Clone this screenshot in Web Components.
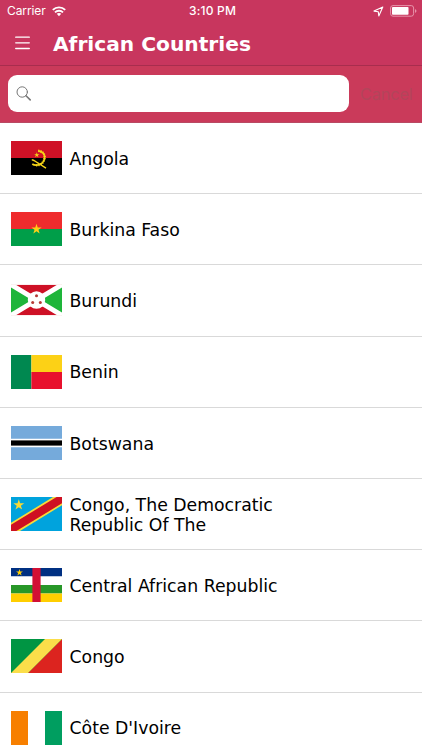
<!DOCTYPE html>
<html lang="en">
<head>
<meta charset="utf-8">
<title>African Countries</title>
<style>
    body {
        margin: 0;
        height: 750px;
        overflow: hidden;
        background: #fff;
        font-family: Verdana, "DejaVu Sans", sans-serif;
    }
</style>
</head>
<body>
<countries-app></countries-app>

<script>
const star = (cx, cy, r, fill) => {
    const points = [];
    for (let i = 0; i < 10; i++) {
        const radius = i % 2 ? r * 0.382 : r;
        const angle = Math.PI * i / 5 - Math.PI / 2;
        points.push(`${(cx + radius * Math.cos(angle)).toFixed(2)},${(cy + radius * Math.sin(angle)).toFixed(2)}`);
    }
    return `<polygon points="${points.join(" ")}" fill="${fill}"/>`;
};

// Every flag is drawn on a 51 x 34 canvas
const flags = {
    ao: `<rect width="51" height="17" fill="#cf1126"/>
        <rect y="17" width="51" height="17" fill="#000"/>
        <path d="M27.2 9.8C31.5 10.2 34 13 33.6 17C33.2 21.3 29.5 24.4 25 24.2C23.7 24.1 22.3 23.7 21.3 23" fill="none" stroke="#f7d618" stroke-width="1.7"/>
        <path d="M27.2 9.8C31.5 10.2 34 13 33.6 17C33.2 21.3 29.5 24.4 25 24.2" fill="none" stroke="#f7d618" stroke-width="2.5" stroke-dasharray="1 1.2"/>
        <path d="M20.8 18.8C23.5 19 24 20.6 27 22L35 27.2" fill="none" stroke="#f7d618" stroke-width="1.4"/>
        ${star(25.8, 14, 2.8, "#f7d618")}`,
    bf: `<rect width="51" height="17" fill="#ef2b2d"/>
        <rect y="17" width="51" height="17" fill="#009e49"/>
        ${star(25.5, 17.2, 5.4, "#fcd116")}`,
    bi: `<svg y="1.7" width="51" height="30.6" viewBox="0 0 51 30.6">
            <rect width="51" height="30.6" fill="#ce1126"/>
            <path d="M0 0L25.5 15.3L0 30.6ZM51 0L25.5 15.3L51 30.6Z" fill="#1eb53a"/>
            <path d="M0 0L51 30.6M51 0L0 30.6" stroke="#fff" stroke-width="5"/>
            <circle cx="25.5" cy="15.3" r="8.7" fill="#fff"/>
            <g fill="#b53b37"><circle cx="25.5" cy="11" r="1.5"/><circle cx="21.7" cy="17.7" r="1.5"/><circle cx="29.3" cy="17.7" r="1.5"/></g>
        </svg>`,
    bj: `<rect width="20.4" height="34" fill="#008850"/>
        <rect x="20.4" width="30.6" height="17" fill="#fcd116"/>
        <rect x="20.4" y="17" width="30.6" height="17" fill="#e8112d"/>`,
    bw: `<rect width="51" height="34" fill="#75aadb"/>
        <rect y="12.75" width="51" height="8.5" fill="#fff"/>
        <rect y="14.4" width="51" height="5.2" fill="#000"/>`,
    cd: `<rect width="51" height="34" fill="#00a3dd"/>
        <path d="M0 25.8L42 0H51V8.2L9 34H0Z" fill="#f8da38"/>
        <path d="M0 27.7L45.6 0H51V6.3L5.4 34H0Z" fill="#ce1021"/>
        ${star(7.8, 8, 5.7, "#f8d936")}`,
    cf: `<rect width="51" height="8.5" fill="#003082"/>
        <rect y="8.5" width="51" height="8.5" fill="#fff"/>
        <rect y="17" width="51" height="8.5" fill="#289728"/>
        <rect y="25.5" width="51" height="8.5" fill="#ffce00"/>
        <rect x="21.4" width="8.2" height="34" fill="#d21034"/>
        ${star(8.5, 4.5, 3.6, "#ffce00")}`,
    cg: `<rect width="51" height="34" fill="#009543"/>
        <path d="M51 0V34H17Z" fill="#dc241f"/>
        <path d="M34 0H51L17 34H0Z" fill="#fbde4a"/>`,
    ci: `<rect width="17" height="34" fill="#f77f00"/>
        <rect x="17" width="17" height="34" fill="#fff"/>
        <rect x="34" width="17" height="34" fill="#009e60"/>`
};

class StatusBar extends HTMLElement {
    constructor() {
        super();
        this.shadowDOM = this.attachShadow({ mode: "open" });
    }

    connectedCallback() {
        this.shadowDOM.innerHTML = `
            <style>
                :host {
                    display: grid;
                    grid-template-columns: 1fr auto 1fr;
                    align-items: center;
                    height: 22px;
                    padding: 0 5px 0 7px;
                    color: #fff;
                    font: 12px/22px Inter, sans-serif;
                }

                div {
                    display: flex;
                    align-items: center;
                    gap: 6px;
                }

                .carrier {
                    letter-spacing: -0.1px;
                }

                .time {
                    font-weight: 500;
                    letter-spacing: 0.2px;
                    padding-left: 1px;
                }

                .right {
                    justify-content: flex-end;
                }

                svg {
                    display: block;
                }
            </style>
            <div><span class="carrier">Carrier</span>
                <svg width="14" height="11" viewBox="0 0 14 11" fill="none" stroke="#fff" stroke-width="1.9">
                    <path d="M.8 3.9C4.3 .5 9.7 .5 13.2 3.9M3 6.4C5.2 4.2 8.8 4.2 11 6.4"/>
                    <path d="M4.8 7.8C6 6.7 8 6.7 9.2 7.8L7 10.2Z" fill="#fff" stroke="none"/>
                </svg>
            </div>
            <span class="time">3:10 PM</span>
            <div class="right">
                <svg width="11" height="11" viewBox="0 0 11 11" fill="none" stroke="#fff" stroke-width="1.1" stroke-linejoin="round">
                    <path d="M9.8 1L1 5.1L5.3 5.7L5.8 10Z"/>
                </svg>
                <svg width="27" height="12" viewBox="0 0 27 12">
                    <rect x=".6" y=".6" width="23" height="10.6" rx="2.4" fill="none" stroke="#e794aa"/>
                    <rect x="2" y="2" width="16.5" height="7.8" rx=".8" fill="#fff"/>
                    <path d="M25 4V8Q26.5 7.2 26.5 6T25 4Z" fill="#e794aa"/>
                </svg>
            </div>
        `;
    }
}

class NavBar extends HTMLElement {
    constructor() {
        super();
        this.shadowDOM = this.attachShadow({ mode: "open" });
    }

    connectedCallback() {
        this.shadowDOM.innerHTML = `
            <style>
                :host {
                    display: flex;
                    align-items: center;
                    gap: 23px;
                    height: 43px;
                    padding-left: 15px;
                    color: #fff;
                    border-bottom: 1px solid #a82d4e;
                }

                h1 {
                    margin: 0;
                    font-size: 20.2px;
                    line-height: 24px;
                    white-space: nowrap;
                }

                svg {
                    display: block;
                    margin-bottom: 1px;
                }
            </style>
            <svg width="15" height="14" viewBox="0 0 15 14" stroke="#fff" stroke-width="1.3" stroke-linecap="round">
                <path d="M.7 1.2H14.3M.7 6.8H14.3M.7 12.5H14.3"/>
            </svg>
            <h1><slot></slot></h1>
        `;
    }
}

class SearchBar extends HTMLElement {
    constructor() {
        super();
        this.shadowDOM = this.attachShadow({ mode: "open" });
    }

    connectedCallback() {
        this.shadowDOM.innerHTML = `
            <style>
                :host {
                    display: flex;
                    align-items: center;
                    gap: 11px;
                    box-sizing: border-box;
                    height: 57px;
                    padding: 0 0 1px 8px;
                    background: #ca3a5a;
                    border-bottom: 1px solid #b94a63;
                }

                .field {
                    display: flex;
                    flex: none;
                    align-items: center;
                    box-sizing: border-box;
                    width: 341px;
                    height: 37px;
                    padding-left: 8px;
                    background: #fff;
                    border-radius: 9px;
                }

                .cancel {
                    color: #b3455a;
                    font: 16.4px/22px Inter, sans-serif;
                    letter-spacing: -0.2px;
                }
            </style>
            <div class="field">
                <svg width="16" height="16" viewBox="0 0 16 16" fill="none" stroke="#777" stroke-linecap="round">
                    <circle cx="6.2" cy="6" r="5.2" stroke-width="1"/>
                    <path d="M10 9.8L14.2 13.9" stroke-width="1.6"/>
                </svg>
            </div>
            <span class="cancel">Cancel</span>
        `;
    }
}

class CountryRow extends HTMLElement {
    constructor() {
        super();
        this.shadowDOM = this.attachShadow({ mode: "open" });
    }

    connectedCallback() {
        this.shadowDOM.innerHTML = `
            <style>
                :host {
                    display: flex;
                    align-items: center;
                    gap: 8px;
                    box-sizing: border-box;
                    height: 71.2px;
                    padding-left: 10.5px;
                    border-bottom: 1px solid #d9d9d9;
                }

                svg {
                    display: block;
                    flex: none;
                }

                .name {
                    width: 225px;
                    padding-top: 2px;
                    color: #000;
                    font-size: 17.3px;
                    line-height: 20.5px;
                }
            </style>
            <svg width="51" height="34" viewBox="0 0 51 34">${flags[this.getAttribute("flag")]}</svg>
            <div class="name"><slot></slot></div>
        `;
    }
}

class CountriesApp extends HTMLElement {
    constructor() {
        super();
        this.shadowDOM = this.attachShadow({ mode: "open" });
    }

    connectedCallback() {
        this.shadowDOM.innerHTML = `
            <style>
                :host {
                    display: block;
                    height: 750px;
                    overflow: hidden;
                }

                header {
                    background: #c8365e;
                }
            </style>
            <header>
                <status-bar></status-bar>
                <nav-bar>African Countries</nav-bar>
                <search-bar></search-bar>
            </header>
            <main>
                <country-row flag="ao">Angola</country-row>
                <country-row flag="bf">Burkina Faso</country-row>
                <country-row flag="bi">Burundi</country-row>
                <country-row flag="bj">Benin</country-row>
                <country-row flag="bw">Botswana</country-row>
                <country-row flag="cd">Congo, The Democratic Republic Of The</country-row>
                <country-row flag="cf">Central African Republic</country-row>
                <country-row flag="cg">Congo</country-row>
                <country-row flag="ci">Côte D'Ivoire</country-row>
            </main>
        `;
    }
}

customElements.define("status-bar", StatusBar);
customElements.define("nav-bar", NavBar);
customElements.define("search-bar", SearchBar);
customElements.define("country-row", CountryRow);
customElements.define("countries-app", CountriesApp);
</script>
</body>
</html>
